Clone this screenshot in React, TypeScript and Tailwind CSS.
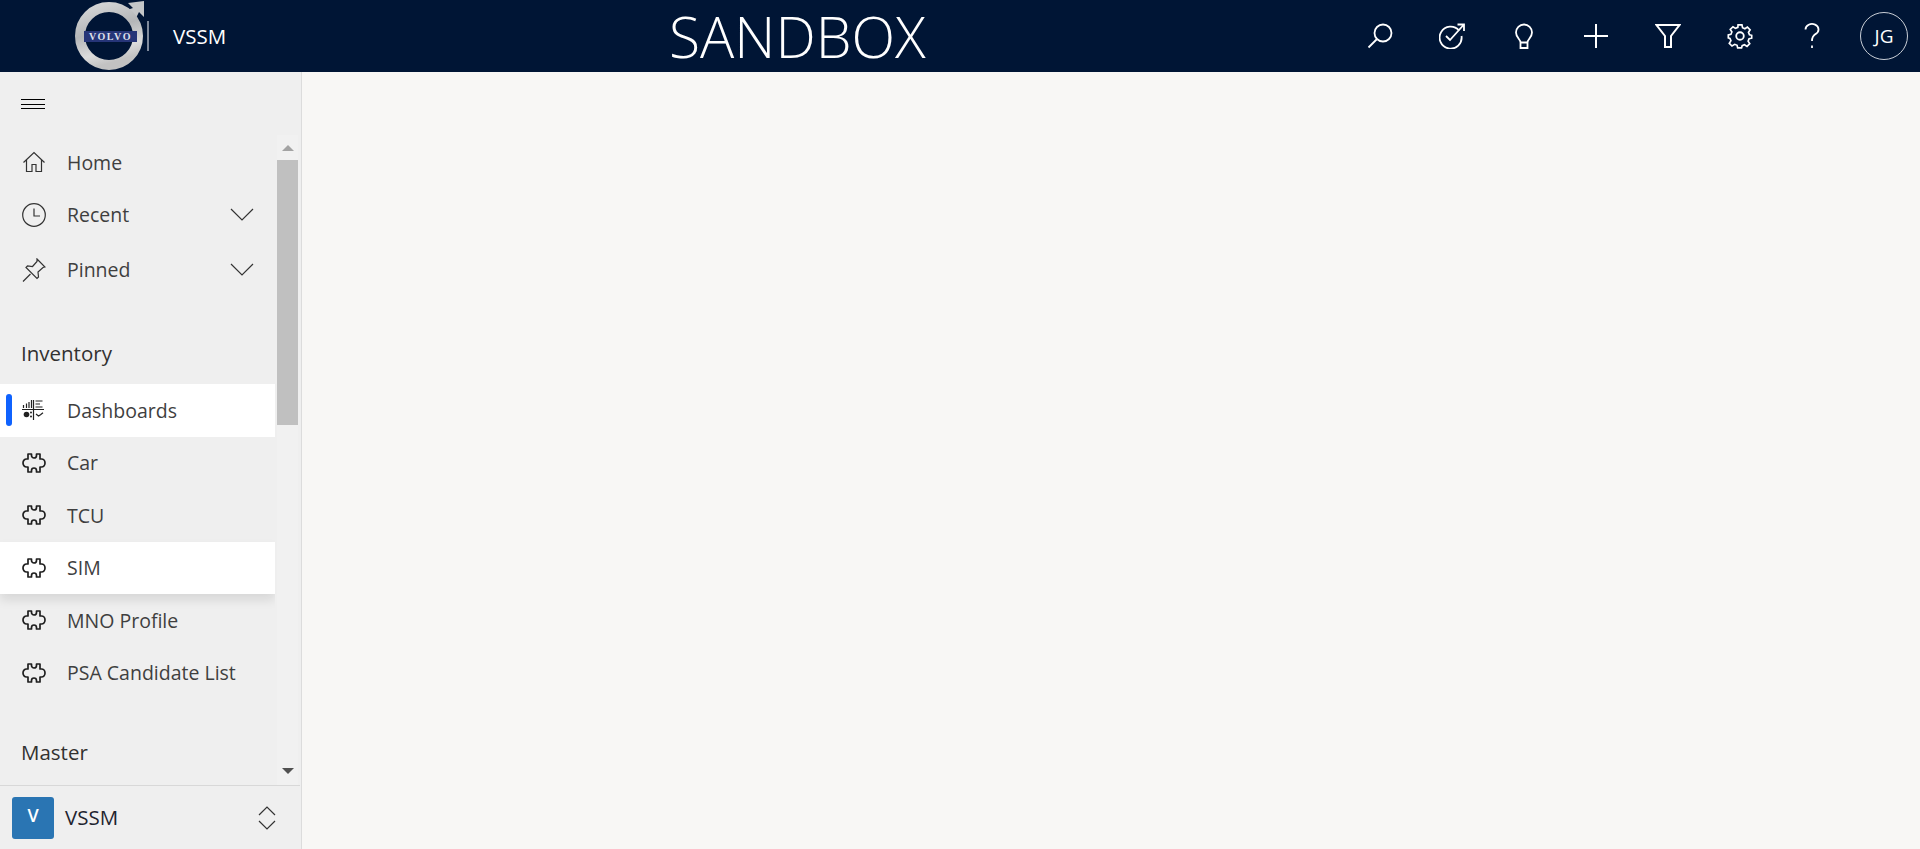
import type { ReactNode } from "react";

const stroke = { fill: "none", stroke: "currentColor", strokeWidth: 1.4 };

const PuzzleIcon = () => (
  <svg width="24" height="22" viewBox="0 0 24 22" fill="none" stroke="#1f1f1f" strokeWidth="1.700" strokeLinejoin="round">
    <path d="M6 2h3.500v1.500a2.500 2.500 0 0 0 5 0V2H18v5h1.500a3.500 4 0 0 1 0 8H18v5h-3.500v-1.500a2.500 2.500 0 0 0-5 0V20H6v-5H4.500a3.500 4 0 0 1 0-8H6z" />
  </svg>
);

const HomeIcon = () => (
  <svg width="24" height="24" viewBox="0 0 24 24" {...stroke} strokeWidth="1.200">
    <path d="M1.500 12.500 12 2.500l10.500 10M4.500 10v11.500h5.500v-7h4v7h5.500V10" />
  </svg>
);

const ClockIcon = () => (
  <svg width="24" height="24" viewBox="0 0 24 24" {...stroke} strokeWidth="1.200">
    <circle cx="12" cy="12" r="11.300" />
    <path d="M12 5.500V13h6" />
  </svg>
);

const PinIcon = () => (
  <svg width="24" height="24" viewBox="0 0 24 24" {...stroke} strokeWidth="1.200">
    <path d="M1 23.500 8.500 16M15 1l8 8-2 .5-5 4.500.5 5-1.500 1.500L4 9.500 5.500 8l5 .5L15 3.500z" />
  </svg>
);

const ChevronDown = () => (
  <svg width="24" height="13" viewBox="0 0 24 13" {...stroke} strokeWidth="1.200">
    <path d="m1 1 11 11L23 1" />
  </svg>
);

const DashboardsIcon = () => (
  <svg width="22" height="20" viewBox="0 0 22 20" fill="none" stroke="#222" strokeWidth="1.200">
    <path d="M0 9.500h22M11.500 0v20" />
    <path d="M1.500 8V5M4.500 8V3.500M7 8V2M9.500 8V0" />
    <path d="M13.500 1h7M13.500 4h4.500M13.500 7h7" />
    <circle cx="4.500" cy="14.500" r="2.800" fill="#222" stroke="none" />
    <circle cx="9" cy="12.500" r="1" fill="#222" stroke="none" />
    <circle cx="9" cy="16.500" r="1" fill="#222" stroke="none" />
    <path d="m14 14 2.500 2 2-1.300 2.500-2" />
  </svg>
);

const HeaderIcons: ReactNode[] = [
  <svg key="search" width="26" height="26" viewBox="0 0 26 26" {...stroke} strokeWidth="1.800">
    <circle cx="16" cy="10" r="8.500" />
    <path d="M10 16 1.500 24.500" />
  </svg>,
  <svg key="goal" width="26" height="26" viewBox="0 0 26 26" {...stroke} strokeWidth="1.800">
    <path d="M20 7.500a11 11 0 1 0 2.500 5.500" />
    <path d="m7 13 4 4L24.500 2M18.500 1.500h6.500V8" />
  </svg>,
  <svg key="bulb" width="18" height="26" viewBox="0 0 18 26" {...stroke} strokeWidth="1.800">
    <path d="M5.500 19.500c0-3-4.500-5-4.500-10a8 8 0 0 1 16 0c0 5-4.500 7-4.500 10zM5.500 19.500V25h7v-5.500" />
  </svg>,
  <svg key="plus" width="26" height="26" viewBox="0 0 26 26" {...stroke} strokeWidth="2">
    <path d="M13 1v24M1 13h24" />
  </svg>,
  <svg key="filter" width="26" height="26" viewBox="0 0 26 26" {...stroke} strokeWidth="2">
    <path d="M1.500 2h23L16 13v11h-6V13z" />
  </svg>,
  <svg key="gear" width="26" height="26" viewBox="0 0 24 24" {...stroke} strokeWidth="1.700">
    <circle cx="12" cy="12" r="3.500" />
    <path d="M10 1h4l.6 3 2.400 1 2.600-1.700 2.800 2.800L20.700 8.700l1 2.400 2.300.6v3l-2.700.600-1 2.400 1.700 2.600-2.800 2.800-2.600-1.700-2.400 1-.6 2.300h-4l-.6-2.700-2.400-1L3.800 22.700 1 19.900l1.700-2.600-1-2.400L0 14.300v-3l2.700-.6 1-2.400L2 5.700l2.800-2.800L7.400 4.600 9.800 3.600z" transform="translate(1.200 .8) scale(.9)" />
  </svg>,
  <svg key="help" width="16" height="26" viewBox="0 0 16 26" {...stroke} strokeWidth="1.800">
    <path d="M1.500 6.500a6.500 5.500 0 1 1 10 4.600C9 12.800 8 14 8 18" />
    <path d="M8 22.500V25" />
  </svg>,
];

const VolvoLogo = () => (
  <svg width="74" height="72" viewBox="0 0 74 72" className="shrink-0">
    <defs>
      <linearGradient id="ring" x1="0.100" y1="0" x2="0.400" y2="1">
        <stop offset="0" stopColor="#d4d5d6" />
        <stop offset="0.450" stopColor="#b4b6b8" />
        <stop offset="0.800" stopColor="#dcdcdc" />
        <stop offset="1" stopColor="#c2c2c2" />
      </linearGradient>
    </defs>
    <path d="M48 12 60 8l-5-5 16-2v16l-5-5-6 12z" fill="#c4c6c8" />
    <circle cx="36" cy="36" r="29" fill="none" stroke="url(#ring)" strokeWidth="10" />
    <rect x="11" y="31" width="53" height="11" fill="#263578" />
    <text
      x="37.500"
      y="40"
      textAnchor="middle"
      fontFamily='"Liberation Serif", serif'
      fontWeight="700"
      fontSize="10"
      fill="#dfe0ea"
      letterSpacing="1.500"
    >
      VOLVO
    </text>
  </svg>
);

const NavRow = ({
  icon,
  label,
  active,
  shadow,
  chevron,
  marker,
}: {
  icon: ReactNode;
  label: string;
  active?: boolean;
  shadow?: boolean;
  chevron?: boolean;
  marker?: boolean;
}) => (
  <div
    className={`relative flex h-[52.5px] items-center pl-[22px] ${active ? "bg-white" : ""} ${
      shadow ? "shadow-[0_6px_10px_rgba(0,0,0,0.1)]" : ""
    }`}
  >
    {marker && <span className="absolute left-[6px] top-[10px] h-[32px] w-[6px] rounded-full bg-[#0f62fe]" />}
    <span className="flex w-[45px] shrink-0 items-center text-[#333]">{icon}</span>
    <span className="text-[19.500px] leading-none text-[#3f3f3f]">{label}</span>
    {chevron && (
      <span className="ml-auto mr-[21px] text-[#333]">
        <ChevronDown />
      </span>
    )}
  </div>
);

const SectionTitle = ({ children, className }: { children: string; className: string }) => (
  <div className={`flex h-[52px] items-center pb-[2px] pl-[21px] text-[20.500px] font-medium text-[#323130] ${className}`}>
    {children}
  </div>
);

export default function App() {
  return (
    <div className="flex h-[849px] w-[1920px] flex-col overflow-hidden bg-[#f8f7f5] font-['Open_Sans',sans-serif]">
      {/* Top bar */}
      <header className="flex h-[72px] shrink-0 items-center bg-[#001535] text-white">
        <div className="ml-[73px]">
          <VolvoLogo />
        </div>
        <span className="h-[30px] w-[2px] bg-[#7f8a9c]" />
        <span className="ml-[24px] w-[54px] shrink-0 whitespace-nowrap text-[20.500px]">VSSM</span>
        <span className="ml-[442px] whitespace-nowrap text-[57px] font-light leading-[72px]">SANDBOX</span>
        <div className="ml-auto flex items-center pr-[12px]">
          {HeaderIcons.map((icon, i) => (
            <div key={i} className="flex h-[72px] w-[72px] items-center justify-center">
              {icon}
            </div>
          ))}
          <div className="ml-[12px] flex h-[48px] w-[48px] items-center justify-center rounded-full border border-[#c9ced6] text-[19px]">
            JG
          </div>
        </div>
      </header>

      <div className="flex min-h-0 flex-1">
        {/* Side navigation */}
        <aside className="flex w-[302px] shrink-0 flex-col border-r border-[#dcdcdc] bg-[#efefef]">
          <div className="flex min-h-0 flex-1">
            <nav className="w-[275px] shrink-0 overflow-hidden">
              <div className="flex h-[64px] flex-col justify-center gap-[3.500px] pl-[21px]">
                <span className="h-px w-[24px] bg-black" />
                <span className="h-px w-[24px] bg-black" />
                <span className="h-px w-[24px] bg-black" />
              </div>
              <NavRow icon={<HomeIcon />} label="Home" />
              <NavRow icon={<ClockIcon />} label="Recent" chevron />
              <div className="mt-[2.500px]">
                <NavRow icon={<PinIcon />} label="Pinned" chevron />
              </div>
              <SectionTitle className="mt-[32px]">Inventory</SectionTitle>
              <div className="mt-[4px]">
                <NavRow icon={<DashboardsIcon />} label="Dashboards" active marker />
                <NavRow icon={<PuzzleIcon />} label="Car" />
                <NavRow icon={<PuzzleIcon />} label="TCU" />
                <NavRow icon={<PuzzleIcon />} label="SIM" active shadow />
                <NavRow icon={<PuzzleIcon />} label="MNO Profile" />
                <NavRow icon={<PuzzleIcon />} label="PSA Candidate List" />
              </div>
              <SectionTitle className="mt-[28px]">Master</SectionTitle>
            </nav>

            {/* Scrollbar */}
            <div className="ml-[2px] mt-[63px] flex w-[21px] flex-col items-center justify-between bg-[#f1f1f1]">
              <div className="flex w-full flex-col items-center">
                <span className="mt-[10px] h-0 w-0 border-x-[6px] border-b-[6px] border-x-transparent border-b-[#a3a3a3]" />
                <span className="mt-[9px] h-[265px] w-full bg-[#c0c0c0]" />
              </div>
              <span className="mb-[11px] h-0 w-0 border-x-[6px] border-t-[6px] border-x-transparent border-t-[#505050]" />
            </div>
          </div>

          {/* App switcher */}
          <div className="mr-px flex h-[64px] shrink-0 items-center border-t border-[#d8d8d8] pl-[12px]">
            <div className="flex h-[42px] w-[42px] items-center justify-center rounded-[3px] bg-[#2a75b3] pb-[5px] text-[18px] font-semibold text-white">
              V
            </div>
            <span className="ml-[11px] text-[20.500px] font-medium text-[#1f2430]">VSSM</span>
            <svg width="18" height="26" viewBox="0 0 18 26" className="ml-auto mr-[24px] text-[#333]" {...stroke} strokeWidth="1.200">
              <path d="m1 10 8-8 8 8M1 16l8 8 8-8" />
            </svg>
          </div>
        </aside>

        <main className="flex-1" />
      </div>
    </div>
  );
}
